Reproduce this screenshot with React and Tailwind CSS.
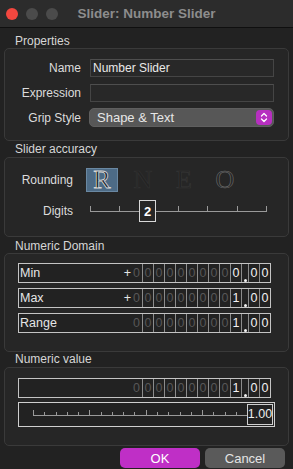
import React from "react";

const DIM = [0, 1, 2, 3, 4, 5, 6, 7];

function DigitBox({ label, plus, intDigit }) {
  return (
    <div className="ml-[13px] w-[253px] h-[20px] border border-[#c4c4c4] bg-[#222222] flex items-stretch text-[12.5px] leading-none">
      <div className="flex-1 flex items-center pl-[1px] text-[#e6e6e6]">{label}</div>
      {plus ? (
        <div className="w-[7px] flex items-center justify-center text-[#e6e6e6]">+</div>
      ) : (
        <div className="w-[7px]" />
      )}
      <div className="w-[11px] flex items-center justify-center text-[#575757]">0</div>
      {DIM.map((i) => (
        <div key={i} className="w-[11px] border-l border-[#8c8c8c] flex items-center justify-center text-[#575757]">
          0
        </div>
      ))}
      <div className="w-[11px] border-l border-[#8c8c8c] flex items-center justify-center text-[#f2f2f2]">{intDigit}</div>
      <div className="w-[7px] border-l border-[#8c8c8c] flex items-end justify-center">
        <div className="w-[3px] h-[3px] rounded-full bg-[#f2f2f2]" />
      </div>
      <div className="w-[11px] border-l border-[#8c8c8c] flex items-center justify-center text-[#f2f2f2]">0</div>
      <div className="w-[11px] border-l border-[#8c8c8c] flex items-center justify-center text-[#f2f2f2]">0</div>
    </div>
  );
}

function SectionLabel({ children, cls }) {
  return <div className={"pl-[15px] text-[12px] leading-[14px] text-[#d6d6d6] " + cls}>{children}</div>;
}

export default function App() {
  const valueTicks = Array.from({ length: 19 }, (_, i) => i);
  const digitTicks = Array.from({ length: 7 }, (_, i) => i);
  return (
    <div className="w-[293px] h-[469px] bg-[#222222] font-['Liberation_Sans',Arial,sans-serif] overflow-hidden flex flex-col">
      {/* Title bar */}
      <div className="h-[28px] shrink-0 bg-[#2c2c2c] border-b border-[#0f0f0f] flex items-center">
        <div className="w-[60px] flex items-center gap-[8px] pl-[6px]">
          <div className="w-[12px] h-[12px] rounded-full bg-[#f2473f]" />
          <div className="w-[12px] h-[12px] rounded-full bg-[#4b4b4b]" />
          <div className="w-[12px] h-[12px] rounded-full bg-[#4b4b4b]" />
        </div>
        <div className="flex-1 text-center text-[13.5px] font-bold text-[#8d8d8d] leading-none">Slider: Number Slider</div>
        <div className="w-[60px]" />
      </div>

      <SectionLabel cls="h-[20px] pt-[6px]">Properties</SectionLabel>
      <div className="mx-[4px] bg-[#262626] border border-[#3a3a3a] rounded-[5px] pt-[10px] pb-[13px] text-[12px]">
        <div className="flex items-center">
          <div className="w-[76px] text-right text-[#dcdcdc]">Name</div>
          <div className="ml-[9px] w-[184px] h-[18px] bg-[#282828] border border-[#454545] border-t-[#4e4e4e] flex items-center pl-[2px] text-[#e8e8e8]">
            Number Slider
          </div>
        </div>
        <div className="flex items-center mt-[7px]">
          <div className="w-[76px] text-right text-[#dcdcdc]">Expression</div>
          <div className="ml-[9px] w-[184px] h-[18px] bg-[#282828] border border-[#454545] border-t-[#4e4e4e]" />
        </div>
        <div className="flex items-center mt-[6px]">
          <div className="w-[76px] text-right text-[#dcdcdc]">Grip Style</div>
          <div className="ml-[8px] w-[185px] h-[19px] bg-[#575757] rounded-[5px] border border-[#5f5f5f] flex items-center justify-between pl-[7px] pr-[1px]">
            <span className="text-[13px] text-[#e6e6e6] leading-none">Shape &amp; Text</span>
            <div className="w-[16px] h-[15px] rounded-[4px] bg-[#b72fc0] flex items-center justify-center">
              <svg width="8" height="11" viewBox="0 0 8 11" fill="none" stroke="#ffffff" strokeWidth="1.3" strokeLinecap="round" strokeLinejoin="round">
                <path d="M1.5 4 L4 1.5 L6.5 4" />
                <path d="M1.5 7 L4 9.5 L6.5 7" />
              </svg>
            </div>
          </div>
        </div>
      </div>

      <SectionLabel cls="h-[16px] pt-[1px]">Slider accuracy</SectionLabel>
      <div className="mx-[4px] bg-[#262626] border border-[#3a3a3a] rounded-[5px] pt-[10px] pb-[14px] text-[12px]">
        <div className="flex items-center h-[24px]">
          <div className="w-[68px] text-right text-[#dcdcdc]">Rounding</div>
          <div className="ml-[13px] flex gap-[9px]">
            <div className="w-[32px] h-[24px] bg-[#4d6b86] border border-[#6a88a2] flex items-center justify-center">
              <span className="font-['Liberation_Serif',serif] text-[26px] leading-none text-[#1d252d] [-webkit-text-stroke:0.8px_#d6d6d6]">R</span>
            </div>
            <div className="w-[32px] h-[24px] flex items-center justify-center">
              <span className="font-['Liberation_Serif',serif] text-[26px] leading-none text-[#232323] [-webkit-text-stroke:0.7px_#313131]">N</span>
            </div>
            <div className="w-[32px] h-[24px] flex items-center justify-center">
              <span className="font-['Liberation_Serif',serif] text-[26px] leading-none text-[#232323] [-webkit-text-stroke:0.7px_#353535]">E</span>
            </div>
            <div className="w-[32px] h-[24px] flex items-center justify-center">
              <span className="font-['Liberation_Serif',serif] text-[26px] leading-none text-[#262626] [-webkit-text-stroke:0.6px_#6e6e6e]">O</span>
            </div>
          </div>
        </div>
        <div className="flex items-center h-[22px] mt-[8px]">
          <div className="w-[68px] text-right text-[#dcdcdc]">Digits</div>
          <div className="ml-[13px] w-[184px] h-[22px] relative">
            <svg width="184" height="22" viewBox="0 0 184 22">
              <line x1="4" y1="11.5" x2="180" y2="11.5" stroke="#9a9a9a" strokeWidth="1" />
              {digitTicks.map((i) => {
                const x = Math.round(4 + i * 29.33) + 0.5;
                return <line key={i} x1={x} y1="6" x2={x} y2="12" stroke="#9a9a9a" strokeWidth="1" />;
              })}
            </svg>
            <div className="absolute left-[53px] top-0 w-[17px] h-[22px] border border-[#d8d8d8] bg-[#262626] flex items-center justify-center text-[13px] font-bold text-white leading-none">
              2
            </div>
          </div>
        </div>
      </div>

      <SectionLabel cls="h-[16px] pt-[2px]">Numeric Domain</SectionLabel>
      <div className="mx-[4px] bg-[#262626] border border-[#3a3a3a] rounded-[5px] pt-[9px] pb-[18px] flex flex-col gap-[5px]">
        <DigitBox label="Min" plus intDigit="0" />
        <DigitBox label="Max" plus intDigit="1" />
        <DigitBox label="Range" intDigit="1" />
      </div>

      <SectionLabel cls="h-[15px] pt-[0px]">Numeric value</SectionLabel>
      <div className="mx-[4px] bg-[#262626] border border-[#3a3a3a] rounded-[5px] pt-[10px] pb-[18px] flex flex-col gap-[4px]">
        <DigitBox label="" intDigit="1" />
        <div className="ml-[13px] w-[257px] h-[25px] border border-[#cfcfcf] bg-[#222222] flex items-stretch py-[0px] pr-[1px]">
          <div className="flex-1 pl-[14px] flex items-center">
            <svg width="214" height="23" viewBox="0 0 214 23">
              <line x1="0" y1="12.5" x2="214" y2="12.5" stroke="#9a9a9a" strokeWidth="1" />
              {valueTicks.map((i) => {
                const x = Math.round(i * 11.27) + 0.5;
                const tall = i % 5 === 0;
                return <line key={i} x1={x} y1={tall ? 7 : 9} x2={x} y2="13" stroke="#9a9a9a" strokeWidth="1" />;
              })}
            </svg>
          </div>
          <div className="w-[26px] my-[1px] border border-[#cfcfcf] flex items-center justify-center text-[12.5px] text-[#eeeeee] leading-none">
            1.00
          </div>
        </div>
      </div>

      <div className="mt-[2px] flex pl-[120px] gap-[5px]">
        <div className="w-[80px] h-[20px] rounded-[5px] bg-[#bf2fc6] flex items-center justify-center text-[13px] text-white leading-none">
          OK
        </div>
        <div className="w-[80px] h-[20px] rounded-[5px] bg-[#5a5a5a] flex items-center justify-center text-[13px] text-[#e4e4e4] leading-none">
          Cancel
        </div>
      </div>
    </div>
  );
}
